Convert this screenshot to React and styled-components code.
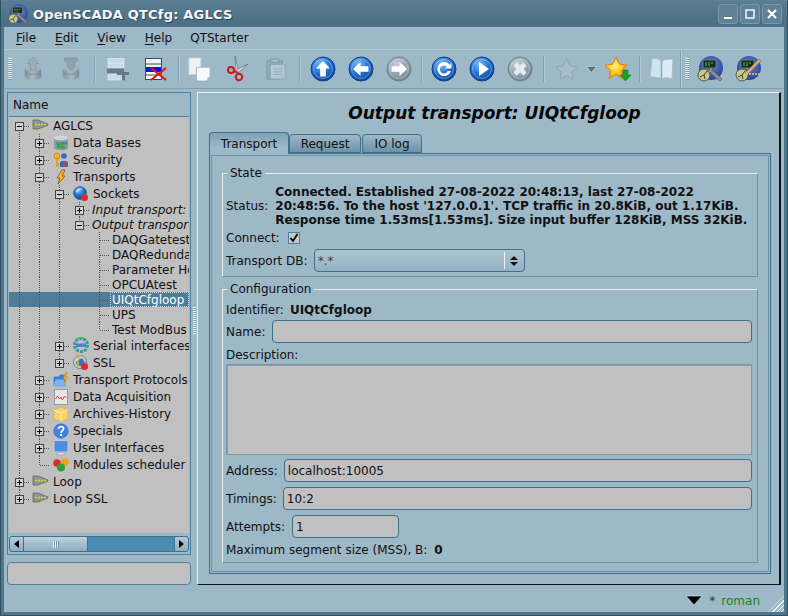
import styled, { createGlobalStyle } from "styled-components";

const GlobalStyle = createGlobalStyle`
  html, body { margin: 0; padding: 0; background: #9db8c7; }
  #root { width: 788px; height: 616px; overflow: hidden; }
  * { box-sizing: border-box; }
`;

const Window = styled.div`
  width: 788px;
  height: 616px;
  display: flex;
  flex-direction: column;
  background: #9db8c7;
  border: 1px solid #2f4f63;
  border-top-color: #5d8096;
  font-family: "DejaVu Sans", sans-serif;
  font-size: 12px;
  color: #111;
  overflow: hidden;
`;

const TitleBar = styled.div`
  height: 26px;
  flex: none;
  display: flex;
  align-items: center;
  padding: 0 5px 0 7px;
  background: linear-gradient(#597d92, #4a6f85);
`;

const TitleText = styled.div`
  margin-left: 5px;
  font-weight: bold;
  font-size: 13px;
  letter-spacing: 0.2px;
  color: #f4f7f9;
  text-shadow: 1px 1px 1px #2c4252;
  flex: 1;
`;

const WinButton = styled.div`
  width: 20px;
  height: 20px;
  margin-left: 2px;
  border: 1px solid #7b99ab;
  border-radius: 3px;
  background: #5f8297;
  display: flex;
  align-items: center;
  justify-content: center;
`;

const Body = styled.div`
  flex: 1;
  min-height: 0;
  display: flex;
  flex-direction: column;
  border-left: 3px solid #50768c;
  border-right: 3px solid #50768c;
  border-bottom: 3px solid #50768c;
`;

const MenuBar = styled.div`
  height: 23px;
  flex: none;
  display: flex;
  align-items: center;
  padding-left: 12px;
  border-bottom: 1px solid #b4cad6;
`;

const MenuItem = styled.span`
  margin-right: ${(p) => p.$gap}px;
  & u { text-underline-offset: 2px; }
`;

const ToolRow = styled.div`
  height: 39px;
  flex: none;
  display: flex;
  align-items: center;
  border-bottom: 1px solid #7f9fb2;
`;

const Grip = styled.div`
  width: 4px;
  height: 22px;
  margin: 0 ${(p) => p.$right}px 0 ${(p) => p.$left}px;
  flex: none;
  background: repeating-linear-gradient(#f1f5f7 0 1px, #7c99aa 1px 2px);
`;

const ToolButton = styled.div`
  width: ${(p) => p.$w || 38}px;
  height: 36px;
  flex: none;
  display: flex;
  align-items: center;
  justify-content: center;
`;

const ToolSep = styled.div`
  width: ${(p) => p.$w}px;
  height: 26px;
  flex: none;
  display: flex;
  justify-content: center;
  &::before {
    content: "";
    width: 1px;
    background: #84a2b4;
    box-shadow: 1px 0 0 #b4cad6;
  }
`;

const ToolEdge = styled.div`
  width: 2px;
  height: 38px;
  flex: none;
  background: #7f9fb2;
  border-right: 1px solid #b4cad6;
`;

const Main = styled.div`
  flex: 1;
  min-height: 0;
  display: flex;
  padding: 3px 3px 0 3px;
`;

const LeftColumn = styled.div`
  width: 184px;
  flex: none;
  display: flex;
  flex-direction: column;
  gap: 7px;
  padding-bottom: 3px;
`;

const TreePanel = styled.div`
  height: 463px;
  flex: none;
  display: flex;
  flex-direction: column;
  border: 1px solid #4f7f9c;
  padding: 1px;
  background: #9db8c7;
`;

const TreeHeader = styled.div`
  height: 23px;
  flex: none;
  padding: 0 0 0 4px;
  display: flex;
  align-items: center;
  border-bottom: 1px solid #4f7f9c;
`;

const TreeBody = styled.div`
  flex: 1;
  min-height: 0;
  background: #c0c0c0;
  overflow: hidden;
`;

const Row = styled.div`
  height: ${(p) => p.$h}px;
  display: flex;
  align-items: stretch;
  white-space: nowrap;
  padding-left: 1px;
  background: ${(p) => (p.$selected ? "#4f7d99" : "transparent")};
  color: ${(p) => (p.$selected ? "#fff" : "#111")};
  font-style: ${(p) => (p.$italic ? "italic" : "normal")};
`;

const dots = "repeating-linear-gradient(#555 0 1px, transparent 1px 2px)";
const hdots = "repeating-linear-gradient(90deg, #555 0 1px, transparent 1px 2px)";

const GuideCell = styled.div`
  width: 20px;
  flex: none;
  position: relative;
  &::before {
    content: "";
    display: ${(p) => (p.$line ? "block" : "none")};
    position: absolute;
    left: 9px;
    top: 0;
    bottom: 0;
    width: 1px;
    background: ${dots};
  }
`;

const BranchCell = styled.div`
  width: 20px;
  flex: none;
  position: relative;
  display: flex;
  align-items: center;
  &::before {
    content: "";
    position: absolute;
    left: 9px;
    top: ${(p) => (p.$first ? "50%" : "0")};
    bottom: ${(p) => (p.$last ? "50%" : "0")};
    width: 1px;
    background: ${dots};
  }
  &::after {
    content: "";
    position: absolute;
    left: 10px;
    right: 0;
    top: 50%;
    height: 1px;
    background: ${hdots};
  }
`;

const Expander = styled.div`
  position: absolute;
  z-index: 1;
  left: 5px;
  top: 50%;
  margin-top: -4px;
  width: 9px;
  height: 9px;
  border: 1px solid #444;
  background: #d0d0d0;
  &::before {
    content: "";
    position: absolute;
    left: 1px;
    right: 1px;
    top: 3px;
    height: 1px;
    background: #000;
  }
  &::after {
    content: "";
    display: ${(p) => (p.$open ? "none" : "block")};
    position: absolute;
    top: 1px;
    bottom: 1px;
    left: 3px;
    width: 1px;
    background: #000;
  }
`;

const TreeIcon = styled.div`
  width: 21px;
  flex: none;
  display: flex;
  align-items: center;
  justify-content: center;
`;

const TreeLabel = styled.div`
  display: flex;
  align-items: center;
  padding-left: 2px;
  ${(p) => p.$current && `flex: 1; outline: 1px dotted #c8d6de; outline-offset: -1px;`}
`;

const HScroll = styled.div`
  height: 16px;
  flex: none;
  display: flex;
  margin: 3px 0 1px;
  border: 1px solid #3f6f8d;
  border-radius: 3px;
  background: #4b8cb2;
  overflow: hidden;
`;

const ScrollArrow = styled.div`
  width: 14px;
  flex: none;
  background: linear-gradient(#b4cbd8, #8fadbe);
  border-left: ${(p) => (p.$right ? "1px solid #3f6f8d" : "none")};
  border-right: ${(p) => (p.$right ? "none" : "1px solid #3f6f8d")};
  display: flex;
  align-items: center;
  justify-content: center;
  &::before {
    content: "";
    border-top: 4px solid transparent;
    border-bottom: 4px solid transparent;
    border-left: ${(p) => (p.$right ? "5px solid #000" : "none")};
    border-right: ${(p) => (p.$right ? "none" : "5px solid #000")};
  }
`;

const ScrollThumb = styled.div`
  width: 64px;
  flex: none;
  background: linear-gradient(#bdd1dc, #8fadbe);
  border-right: 1px solid #3f6f8d;
  display: flex;
  align-items: center;
  justify-content: center;
  gap: 1px;
`;

const ThumbLine = styled.div`
  width: 1px;
  height: 7px;
  background: #f3f6f8;
  box-shadow: 1px 0 0 #6e8da0;
`;

const ScrollGroove = styled.div`
  flex: 1;
`;

const HintBox = styled.div`
  height: 23px;
  flex: none;
  background: #c0c0c0;
  border: 1px solid #4f7f9c;
  border-radius: 4px;
`;

const Splitter = styled.div`
  width: 6px;
  flex: none;
  display: flex;
  align-items: center;
  justify-content: center;
  padding-bottom: 28px;
  &::before {
    content: "";
    width: 3px;
    height: 27px;
    margin-top: -8px;
    background: repeating-linear-gradient(#eef3f6 0 1px, #86a4b5 1px 2px);
  }
`;

const RightPanel = styled.div`
  flex: 1;
  min-width: 0;
  display: flex;
  flex-direction: column;
  border-top: 1px solid #eef3f6;
  border-left: 1px solid #eef3f6;
  border-right: 2px solid #111;
  border-bottom: 1px solid #111;
  padding: 0 8px 10px 11px;
`;

const PageTitle = styled.div`
  height: 39px;
  flex: none;
  display: flex;
  align-items: center;
  justify-content: center;
  font-size: 17px;
  font-weight: bold;
  font-style: italic;
  color: #050505;
  padding: 1px 0 0 9px;
`;

const TabBar = styled.div`
  height: 21px;
  flex: none;
  display: flex;
  align-items: flex-end;
  position: relative;
  z-index: 1;
`;

const Tab = styled.div`
  width: ${(p) => p.$w}px;
  height: ${(p) => (p.$active ? 22 : 19)}px;
  flex: none;
  display: flex;
  align-items: center;
  justify-content: center;
  margin-right: ${(p) => (p.$active ? 0 : 1)}px;
  margin-bottom: ${(p) => (p.$active ? -1 : 0)}px;
  border: 1px solid #3f6f8d;
  border-bottom: ${(p) => (p.$active ? "none" : "1px solid #3f6f8d")};
  border-radius: 4px 4px 0 0;
  background: ${(p) =>
    p.$active
      ? "linear-gradient(#7ea2b7, #9db8c7 70%)"
      : "linear-gradient(#9db8c7, #6e92a8)"};
`;

const TabPane = styled.div`
  flex: 1;
  min-height: 0;
  display: flex;
  flex-direction: column;
  gap: 5px;
  border: 1px solid #3f6f8d;
  outline: 1px solid #6e92a8;
  outline-offset: -3px;
  padding: 12px 12px 11px 12px;
`;

const Group = styled.fieldset`
  margin: 0;
  padding: ${(p) => p.$pad};
  min-width: 0;
  border: 1px solid #7d8f9b;
  border-top-color: #e8eff3;
  border-left-color: #e8eff3;
  display: flex;
  flex-direction: column;
  flex: ${(p) => (p.$grow ? 1 : "none")};
  & > legend {
    padding: 0 3px;
    margin-left: 1px;
    line-height: 14px;
  }
`;

const StatusRow = styled.div`
  display: flex;
  align-items: center;
  gap: 7px;
`;

const BoldText = styled.div`
  font-weight: bold;
  line-height: 14px;
  white-space: pre;
`;

const FieldRow = styled.div`
  display: flex;
  align-items: center;
  gap: ${(p) => p.$gap ?? 4}px;
  height: ${(p) => p.$h}px;
  flex: none;
  margin-top: ${(p) => p.$top ?? 0}px;
`;

const CheckBox = styled.div`
  width: 12px;
  height: 12px;
  background: #c8c8c8;
  border: 1px solid #4f7f9c;
  display: flex;
  align-items: center;
  justify-content: center;
`;

const Combo = styled.div`
  width: 211px;
  height: 23px;
  border: 1px solid #3f6f8d;
  border-radius: 4px;
  background: linear-gradient(#adc5d2, #94b1c1);
  display: flex;
  align-items: center;
  padding-left: 3px;
  color: #444;
`;

const ComboText = styled.span`
  flex: 1;
`;

const ComboArrows = styled.div`
  width: 20px;
  height: 17px;
  border-left: 1px solid #eef3f6;
  display: flex;
  flex-direction: column;
  align-items: center;
  justify-content: center;
  gap: 2px;
`;

const Arrow = styled.div`
  width: 0;
  height: 0;
  border-left: 4px solid transparent;
  border-right: 4px solid transparent;
  border-bottom: ${(p) => (p.$up ? "4px solid #111" : "none")};
  border-top: ${(p) => (p.$up ? "none" : "4px solid #111")};
`;

const TextInput = styled.div`
  flex: ${(p) => (p.$w ? "none" : 1)};
  width: ${(p) => (p.$w ? `${p.$w}px` : "auto")};
  height: 23px;
  background: #c0c0c0;
  border: 1px solid #3f6f8d;
  border-radius: 4px;
  padding-left: 3px;
  display: flex;
  align-items: center;
`;

const TextArea = styled.div`
  height: 91px;
  flex: none;
  margin-top: 1px;
  background: #c0c0c0;
  border: 1px solid #7d97a8;
  box-shadow: inset 1px 1px 0 #8a9ca8;
`;

const StatusBar = styled.div`
  height: 27px;
  flex: none;
  display: flex;
  align-items: center;
  justify-content: flex-end;
  gap: 6px;
  padding: 4px 24px 0 0;
  position: relative;
`;

const UserName = styled.span`
  color: #118a11;
`;

const StarMark = styled.span`
  color: #333;
  font-size: 12px;
`;

const SizeGrip = styled.div`
  position: absolute;
  right: 0;
  bottom: 0;
  width: 16px;
  height: 16px;
  background: repeating-linear-gradient(135deg, transparent 0 2px, #eef3f6 2px 3px);
  clip-path: polygon(100% 0, 100% 100%, 0 100%);
`;

const SvgDefs = styled.svg`
  position: absolute;
  width: 0;
  height: 0;
`;

/* ---- icons ---- */

const Defs = () => (
  <SvgDefs>
    <defs>
      <radialGradient id="blue" cx="40%" cy="30%" r="75%">
        <stop offset="0" stopColor="#7cc0f4" />
        <stop offset="0.55" stopColor="#1c6ed0" />
        <stop offset="1" stopColor="#0b3d8e" />
      </radialGradient>
      <radialGradient id="grey" cx="40%" cy="30%" r="75%">
        <stop offset="0" stopColor="#c4d0d8" />
        <stop offset="0.6" stopColor="#8e9fab" />
        <stop offset="1" stopColor="#6b7d89" />
      </radialGradient>
      <linearGradient id="drum" x1="0" x2="1" y1="0" y2="0">
        <stop offset="0" stopColor="#7e929f" />
        <stop offset="0.5" stopColor="#a9bac5" />
        <stop offset="1" stopColor="#778b98" />
      </linearGradient>
      <radialGradient id="gold" cx="45%" cy="40%" r="70%">
        <stop offset="0" stopColor="#fff27a" />
        <stop offset="0.6" stopColor="#ffc20a" />
        <stop offset="1" stopColor="#ee7a08" />
      </radialGradient>
      <radialGradient id="logo" cx="50%" cy="40%" r="70%">
        <stop offset="0" stopColor="#5f86d6" />
        <stop offset="1" stopColor="#23398f" />
      </radialGradient>
    </defs>
  </SvgDefs>
);

const Disc = ({ children, fill = "url(#blue)", ring = "#0c3f92" }) => (
  <svg width="26" height="26" viewBox="0 0 26 26">
    <circle cx="13" cy="13" r="12" fill={fill} stroke={ring} strokeWidth="1" />
    <circle cx="13" cy="13" r="9.4" fill="none" stroke="#fff" strokeOpacity="0.35" strokeWidth="1" />
    {children}
  </svg>
);

const DbIcon = ({ down }) => (
  <svg width="20" height="26" viewBox="0 0 22 28">
    <path d="M2 13 v9 c0 5 18 5 18 0 v-9z" fill="url(#drum)" />
    <ellipse cx="11" cy="13" rx="9" ry="3.5" fill="#a3b4bf" />
    <path d="M2 17 c0 4 18 4 18 0" fill="none" stroke="#74889a" />
    {down ? (
      <path d="M4 2 h14 v3 l-3 1 v5 l-4 5 -4 -5 v-5 l-3 -1z" fill="#8fa3af" stroke="#72858f" strokeWidth="0.6" />
    ) : (
      <path d="M11 1 l6 7 h-3 v7 h-6 v-7 h-3z" fill="#9fb0bb" stroke="#72858f" strokeWidth="0.6" />
    )}
  </svg>
);

const AddItemIcon = () => (
  <svg width="22" height="23" viewBox="0 0 22 23">
    <rect x="1" y="0.5" width="16" height="4.5" fill="#c6dbe7" stroke="#e8f0f4" strokeWidth="0.6" />
    <rect x="1" y="5.5" width="16" height="4.5" fill="#c6dbe7" stroke="#e8f0f4" strokeWidth="0.6" />
    <rect x="0" y="10.5" width="17" height="5" fill="#66798a" />
    <rect x="1" y="16" width="16" height="6" fill="#c6dbe7" stroke="#e8f0f4" strokeWidth="0.6" />
    <path d="M10 14 h12 v3 h-4 v5.5 h-3 v-5.5 h-5z" fill="#66798a" />
  </svg>
);

const DelItemIcon = () => (
  <svg width="22" height="23" viewBox="0 0 22 23">
    <rect x="0.5" y="0.5" width="16" height="21" fill="#f4f6f7" stroke="#4a4a4a" />
    <path d="M1 6 h15 M1 17 h15" stroke="#4a4a4a" />
    <rect x="1" y="9" width="15" height="5" fill="#1515d8" />
    <path d="M6 10 l15 12 M21 10 l-15 12" stroke="#e01818" strokeWidth="2.2" />
  </svg>
);

const CopyIcon = () => (
  <svg width="24" height="25" viewBox="0 0 26 27">
    <path d="M1 1 h13 v14 l-3 4 h-10z" fill="#eef3f6" stroke="#c5d2da" />
    <path d="M14 15 l-3 4 v-4z" fill="#a4b6c2" />
    <path d="M9 11 h15 v11 l-3 4 h-12z" fill="#f7f9fa" stroke="#a0b0bb" />
    <path d="M24 22 l-3 4 v-4z" fill="#a4b6c2" />
  </svg>
);

const CutIcon = () => (
  <svg width="24" height="26" viewBox="0 0 24 26">
    <path d="M9 0 l3 13 -2 2 z" fill="#e6ecef" stroke="#5d6b75" strokeWidth="0.7" />
    <path d="M22 8 l-10 5 -2 3 3 0z" fill="#d8e0e5" stroke="#5d6b75" strokeWidth="0.7" />
    <circle cx="5" cy="14" r="3" fill="none" stroke="#c9181c" strokeWidth="2" />
    <circle cx="13" cy="21" r="3.2" fill="none" stroke="#c9181c" strokeWidth="2" />
    <path d="M7 15 l3 1 M12 18 l-1 -2" stroke="#c9181c" strokeWidth="2" />
  </svg>
);

const PasteIcon = () => (
  <svg width="20" height="22" viewBox="0 0 22 24">
    <rect x="1" y="3" width="17" height="20" fill="#90abbb" stroke="#7e98a8" />
    <rect x="5" y="7" width="16" height="16" fill="#b2c9d6" stroke="#8ba6b6" />
    <rect x="5" y="1" width="9" height="4" fill="#a4bccb" stroke="#7e98a8" />
    <path d="M8 12 h10 M8 15 h10 M8 18 h10" stroke="#90abbb" />
  </svg>
);

const ArrowGlyph = ({ dir }) => {
  const rot = { up: 0, left: -90, right: 90 }[dir];
  return (
    <path
      d="M13 5 l7 7.5 h-4.2 v8 h-5.6 v-8 h-4.2z"
      fill="#fff"
      transform={`rotate(${rot} 13 13)`}
    />
  );
};

const StarPath = "M12 1 l3.4 7.2 7.6 1 -5.6 5.3 1.5 7.8 -6.9 -3.9 -6.9 3.9 1.5 -7.8 -5.6 -5.3 7.6 -1z";

const StarGrey = () => (
  <svg width="23" height="22" viewBox="0 0 24 23">
    <path d={StarPath} fill="#a8c0ce" stroke="#8aa4b4" />
  </svg>
);

const StarAdd = () => (
  <svg width="27" height="27" viewBox="0 0 27 27">
    <path d={StarPath} fill="url(#gold)" stroke="#e47a0a" />
    <path d="M19 14 h5 v5 h3 l-5.5 6 -5.5 -6 h3z" fill="#17a517" stroke="#0d7d10" strokeWidth="0.5" />
  </svg>
);

const BookIcon = () => (
  <svg width="25" height="24" viewBox="0 0 25 24">
    <path d="M3 1 c4 0 7 1 9 3 v18 c-3 -2 -7 -2 -11 -2z" fill="#cfe3ee" stroke="#a7bdca" />
    <path d="M24 2 c-4 0 -8 0 -11 2 v18 c3 -2 7 -1 10 0z" fill="#dcebf3" stroke="#a7bdca" />
    <path d="M12.5 4 v18" stroke="#8ea8b7" />
  </svg>
);

const LogoIcon = ({ pencil, size = 26 }) => (
  <svg width={size} height={size} viewBox="0 0 26 26">
    <circle cx="14" cy="12" r="12" fill="url(#logo)" />
    <rect x="6" y="4" width="13" height="8" fill="#1b2c22" stroke="#6d7a80" />
    <path d="M8 7 h9 M8 9 h6" stroke="#38d838" strokeWidth="1" strokeDasharray="2 1" />
    <circle cx="7" cy="19" r="6" fill="#c6c88f" stroke="#55592e" />
    <path d="M7 19 l3 -4 M7 19 l-4 2 M7 19 l1 4" stroke="#3b3d20" strokeWidth="1" />
    {pencil ? (
      <g>
        <path d="M10 17 L24 3 l2 2 -14 14z" fill="#d9a878" stroke="#8d6a40" strokeWidth="0.5" />
        <path d="M11 18 h14" stroke="#e2d25a" strokeWidth="1.6" strokeDasharray="2 1" />
      </g>
    ) : (
      <path d="M12 11 l3 1 1 3 6 5 3 3 -2 2 -3 -2 -6 -6 -3 -1 -1 -3 2 1 1 -1z" fill="#8b8f92" stroke="#4d5154" strokeWidth="0.6" />
    )}
  </svg>
);

const ClusterIcon = () => (
  <svg width="17" height="16" viewBox="0 0 17 16">
    <path d="M1 2 h5 l10 4 v1 l-10 4 h-5z" fill="#8d9894" stroke="#545c57" strokeWidth="0.7" />
    <path d="M3 6.5 h11" stroke="#d9d33a" strokeWidth="1.4" strokeDasharray="2 1" />
    <path d="M1 13 h3 l1 2 M12 13 h3 l1 -1" stroke="#d9d33a" fill="none" />
  </svg>
);

const DbTreeIcon = () => (
  <svg width="16" height="16" viewBox="0 0 16 16">
    <path d="M1 3 v10 c0 3 14 3 14 0 v-10z" fill="#8b9aa3" />
    <ellipse cx="8" cy="3" rx="7" ry="2.4" fill="#cfd6da" />
    <path d="M3 7 l5 1 -1 2 5 1 v3 l-8 -1z" fill="#3aa545" />
    <path d="M8 7 l6 0 v2 l-6 1z" fill="#4a7bc0" />
  </svg>
);

const SecurityIcon = () => (
  <svg width="16" height="16" viewBox="0 0 16 16">
    <circle cx="4" cy="4" r="3" fill="#f2b418" stroke="#b97a0a" strokeWidth="0.7" />
    <path d="M4 7 v8 M4 12 h2 M4 14 h2" stroke="#e79a10" strokeWidth="1.6" />
    <circle cx="11" cy="4" r="2.8" fill="#2f6cc4" />
    <path d="M7 15 v-4 c0 -3 8 -3 8 0 v4z" fill="#2f6cc4" />
    <path d="M10 9 h2 l-0.5 6 h-1z" fill="#e3392a" />
  </svg>
);

const BoltIcon = () => (
  <svg width="16" height="16" viewBox="0 0 16 16">
    <path d="M9 1 L4 9 h3 L5 15 l7 -8 h-3 l3 -6z" fill="#f8c21f" stroke="#a5361c" strokeWidth="0.8" />
  </svg>
);

const GlobeIcon = ({ lock }) => (
  <svg width="16" height="16" viewBox="0 0 16 16">
    <circle cx="7" cy="7" r="6.5" fill={lock ? "#c4d2de" : "url(#blue)"} stroke="#2e5fa5" strokeWidth="0.7" />
    {lock && <circle cx="7" cy="7" r="4" fill="#3775c8" />}
    <path d="M3 5 c2 -3 6 -3 7 -2 c-2 0 -5 1 -6 4z" fill="#dbe9f5" />
    <circle cx="11.5" cy="11.5" r="3.6" fill="#dd2a2a" />
    <path d="M11.5 8 l0.5 -1.5" stroke="#2a9a2a" />
    {lock && <path d="M5 3 a2 2 0 1 1 0.1 0 M5 5 v7" stroke="#efb418" strokeWidth="1.6" fill="none" />}
  </svg>
);

const SerialIcon = () => (
  <svg width="16" height="17" viewBox="0 0 16 17">
    <circle cx="8" cy="8" r="6.5" fill="none" stroke="#2aa39a" strokeWidth="3" strokeDasharray="3 1" />
    <rect x="3" y="6.5" width="10" height="3.5" fill="#5c78d8" />
    <path d="M5 1 h6" stroke="#49b84a" strokeWidth="1.6" />
  </svg>
);

const FolderBoltIcon = () => (
  <svg width="16" height="16" viewBox="0 0 16 16">
    <path d="M1 5 h5 l1 -2 h5 v11 h-11z" fill="#3f80d8" stroke="#2a5ca8" strokeWidth="0.5" />
    <path d="M0.5 14.5 l2 -7 h11 l-2 7z" fill="#7eb3ee" />
    <path d="M13 0 L10 7 h2 l-1 4 4 -6 h-2 l1 -5z" fill="#f3b31b" stroke="#bf6b10" strokeWidth="0.5" />
  </svg>
);

const ChartIcon = () => (
  <svg width="16" height="16" viewBox="0 0 16 16">
    <rect x="1.5" y="0.5" width="13" height="15" fill="#e8e8e8" stroke="#9a9a9a" />
    <path d="M2.5 10 l2 -3 2 3 1.5 -2 1.5 3 2 -4 2 2" fill="none" stroke="#d94a4a" />
  </svg>
);

const CubeIcon = () => (
  <svg width="16" height="16" viewBox="0 0 16 16">
    <path d="M1 4 l7 -3 7 3 v9 l-7 2.5 -7 -2.5z" fill="#f6d469" stroke="#cfa638" strokeWidth="0.5" />
    <path d="M1 4 l7 3 7 -3 M8 7 v8" fill="none" stroke="#fff0b6" />
  </svg>
);

const HelpIcon = () => (
  <svg width="16" height="16" viewBox="0 0 16 16">
    <circle cx="8" cy="8" r="7.2" fill="#3f83e5" stroke="#2e62b8" strokeWidth="0.6" />
    <path d="M5.5 6 c0 -3.5 5.5 -3 5 0 c-0.2 1.6 -2.5 1.7 -2.5 4" fill="none" stroke="#fff" strokeWidth="1.7" />
    <rect x="7" y="11" width="2" height="2" fill="#fff" />
  </svg>
);

const MonitorIcon = () => (
  <svg width="16" height="16" viewBox="0 0 16 16">
    <rect x="1" y="0.5" width="14" height="11.5" fill="#4a8de2" stroke="#c8c8c8" />
    <path d="M5 12.5 h6 l1 2.5 h-8z" fill="#d6d6d6" stroke="#999" strokeWidth="0.5" />
  </svg>
);

const BallsIcon = () => (
  <svg width="16" height="15" viewBox="0 0 16 15">
    <circle cx="4" cy="6" r="3.8" fill="#e02b2b" />
    <circle cx="12" cy="5" r="3.8" fill="#f0a118" />
    <circle cx="8" cy="10.5" r="4" fill="#2ea12e" />
  </svg>
);

const treeIcons = {
  cluster: <ClusterIcon />,
  db: <DbTreeIcon />,
  security: <SecurityIcon />,
  bolt: <BoltIcon />,
  globe: <GlobeIcon />,
  serial: <SerialIcon />,
  ssl: <GlobeIcon lock />,
  folder: <FolderBoltIcon />,
  chart: <ChartIcon />,
  cube: <CubeIcon />,
  help: <HelpIcon />,
  monitor: <MonitorIcon />,
  balls: <BallsIcon />,
};

// guides: one flag per ancestor level, exp: "plus" or "minus"
const treeRows = [
  { h: 17, guides: [], exp: "minus", first: true, icon: "cluster", text: "AGLCS" },
  { h: 17, guides: [1], exp: "plus", icon: "db", text: "Data Bases" },
  { h: 17, guides: [1], exp: "plus", icon: "security", text: "Security" },
  { h: 17, guides: [1], exp: "minus", icon: "bolt", text: "Transports" },
  { h: 17, guides: [1, 1], exp: "minus", icon: "globe", text: "Sockets" },
  { h: 15, guides: [1, 1, 1], exp: "plus", italic: true, text: "Input transport:" },
  { h: 15, guides: [1, 1, 1], exp: "minus", italic: true, last: true, text: "Output transport:" },
  { h: 15, guides: [1, 1, 1, 0], text: "DAQGatetest" },
  { h: 15, guides: [1, 1, 1, 0], text: "DAQRedundancy" },
  { h: 15, guides: [1, 1, 1, 0], text: "Parameter Hostname" },
  { h: 15, guides: [1, 1, 1, 0], text: "OPCUAtest" },
  { h: 15, guides: [1, 1, 1, 0], text: "UIQtCfgloop", selected: true },
  { h: 15, guides: [1, 1, 1, 0], text: "UPS" },
  { h: 15, guides: [1, 1, 1, 0], last: true, text: "Test ModBus" },
  { h: 17, guides: [1, 1], exp: "plus", icon: "serial", text: "Serial interfaces" },
  { h: 17, guides: [1, 1], exp: "plus", last: true, icon: "ssl", text: "SSL" },
  { h: 17, guides: [1], exp: "plus", icon: "folder", text: "Transport Protocols" },
  { h: 17, guides: [1], exp: "plus", icon: "chart", text: "Data Acquisition" },
  { h: 17, guides: [1], exp: "plus", icon: "cube", text: "Archives-History" },
  { h: 17, guides: [1], exp: "plus", icon: "help", text: "Specials" },
  { h: 17, guides: [1], exp: "plus", icon: "monitor", text: "User Interfaces" },
  { h: 17, guides: [1], last: true, icon: "balls", text: "Modules scheduler" },
  { h: 17, guides: [], exp: "plus", icon: "cluster", text: "Loop" },
  { h: 17, guides: [], exp: "plus", last: true, icon: "cluster", text: "Loop SSL" },
];

const TreeRow = ({ row }) => (
  <Row $h={row.h} $selected={row.selected} $italic={row.italic}>
    {row.guides.map((on, i) => (
      <GuideCell key={i} $line={!!on} />
    ))}
    <BranchCell $first={row.first} $last={row.last}>
      {row.exp && <Expander $open={row.exp === "minus"} />}
    </BranchCell>
    {row.icon && <TreeIcon>{treeIcons[row.icon]}</TreeIcon>}
    <TreeLabel $current={row.selected}>{row.text}</TreeLabel>
  </Row>
);

export default function App() {
  return (
    <>
      <GlobalStyle />
      <Defs />
      <Window>
        <TitleBar>
          <LogoIcon size={20} />
          <TitleText>OpenSCADA QTCfg: AGLCS</TitleText>
          <WinButton>
            <svg width="12" height="12" viewBox="0 0 12 12">
              <path d="M2 10 h8" stroke="#fff" strokeWidth="2" />
            </svg>
          </WinButton>
          <WinButton>
            <svg width="12" height="12" viewBox="0 0 12 12">
              <rect x="2" y="2" width="8" height="8" fill="none" stroke="#fff" strokeWidth="1.4" />
            </svg>
          </WinButton>
          <WinButton>
            <svg width="12" height="12" viewBox="0 0 12 12">
              <path d="M2 2 l8 8 M10 2 l-8 8" stroke="#fff" strokeWidth="2" />
            </svg>
          </WinButton>
        </TitleBar>
        <Body>
          <MenuBar>
            <MenuItem $gap={19}><u>F</u>ile</MenuItem>
            <MenuItem $gap={19}><u>E</u>dit</MenuItem>
            <MenuItem $gap={19}><u>V</u>iew</MenuItem>
            <MenuItem $gap={18}><u>H</u>elp</MenuItem>
            <MenuItem $gap={0}>QTStarter</MenuItem>
          </MenuBar>
          <ToolRow>
            <Grip $left={4} $right={2} />
            <ToolButton><DbIcon /></ToolButton>
            <ToolButton><DbIcon down /></ToolButton>
            <ToolSep $w={9} />
            <ToolButton><AddItemIcon /></ToolButton>
            <ToolButton><DelItemIcon /></ToolButton>
            <ToolSep $w={6} />
            <ToolButton><CopyIcon /></ToolButton>
            <ToolButton><CutIcon /></ToolButton>
            <ToolButton><PasteIcon /></ToolButton>
            <ToolSep $w={9} />
            <ToolButton>
              <Disc><ArrowGlyph dir="up" /></Disc>
            </ToolButton>
            <ToolButton>
              <Disc><ArrowGlyph dir="left" /></Disc>
            </ToolButton>
            <ToolButton>
              <Disc fill="url(#grey)" ring="#6f828e"><ArrowGlyph dir="right" /></Disc>
            </ToolButton>
            <ToolSep $w={7} />
            <ToolButton>
              <Disc>
                <path d="M19 9 a7 7 0 1 0 1 6 h-3.4 a4 4 0 1 1 -0.6 -4 l-2.4 1.6 h6.8 v-6.6z" fill="#fff" />
              </Disc>
            </ToolButton>
            <ToolButton>
              <Disc><path d="M10 6 l10 7 -10 7z" fill="#fff" /></Disc>
            </ToolButton>
            <ToolButton>
              <Disc fill="url(#grey)" ring="#6f828e">
                <path d="M8 8 l10 10 M18 8 l-10 10" stroke="#e3edf2" strokeWidth="4.6" />
              </Disc>
            </ToolButton>
            <ToolSep $w={8} />
            <ToolButton><StarGrey /></ToolButton>
            <ToolButton $w={13}>
              <svg width="11" height="7" viewBox="0 0 11 7">
                <path d="M0.5 0.5 h10 l-5 6z" fill="#5c6f7b" stroke="#eef3f6" strokeWidth="0.5" />
              </svg>
            </ToolButton>
            <ToolButton><StarAdd /></ToolButton>
            <ToolSep $w={7} />
            <ToolButton $w={37}><BookIcon /></ToolButton>
            <ToolEdge />
            <Grip $left={3} $right={2} />
            <ToolButton><LogoIcon /></ToolButton>
            <ToolButton $w={37}><LogoIcon pencil /></ToolButton>
          </ToolRow>
          <Main>
            <LeftColumn>
              <TreePanel>
                <TreeHeader>Name</TreeHeader>
                <TreeBody>
                  {treeRows.map((row) => (
                    <TreeRow key={row.text} row={row} />
                  ))}
                </TreeBody>
                <HScroll>
                  <ScrollArrow />
                  <ScrollThumb>
                    <ThumbLine />
                    <ThumbLine />
                    <ThumbLine />
                  </ScrollThumb>
                  <ScrollGroove />
                  <ScrollArrow $right />
                </HScroll>
              </TreePanel>
              <HintBox />
            </LeftColumn>
            <Splitter />
            <RightPanel>
              <PageTitle>Output transport: UIQtCfgloop</PageTitle>
              <TabBar>
                <Tab $w={80} $active>Transport</Tab>
                <Tab $w={72}>Request</Tab>
                <Tab $w={60}>IO log</Tab>
              </TabBar>
              <TabPane>
                <Group $pad="5px 5px 4px 3px">
                  <legend>State</legend>
                  <StatusRow>
                    <span>Status:</span>
                    <BoldText>{"Connected. Established 27-08-2022 20:48:13, last 27-08-2022\n20:48:56. To the host '127.0.0.1'. TCP traffic in 20.8KiB, out 1.17KiB.\nResponse time 1.53ms[1.53ms]. Size input buffer 128KiB, MSS 32KiB."}</BoldText>
                  </StatusRow>
                  <FieldRow $h={18} $top={2} $gap={8}>
                    <span>Connect:</span>
                    <CheckBox>
                      <svg width="10" height="10" viewBox="0 0 10 10">
                        <path d="M1.5 5 l2.5 3 l4.5 -7" fill="none" stroke="#000" strokeWidth="1.8" />
                      </svg>
                    </CheckBox>
                  </FieldRow>
                  <FieldRow $h={23} $top={2} $gap={6}>
                    <span>Transport DB:</span>
                    <Combo>
                      <ComboText>*.*</ComboText>
                      <ComboArrows>
                        <Arrow $up />
                        <Arrow />
                      </ComboArrows>
                    </Combo>
                  </FieldRow>
                </Group>
                <Group $grow $pad="6px 5px 4px 3px">
                  <legend>Configuration</legend>
                  <FieldRow $h={16} $gap={6}>
                    <span>Identifier:</span>
                    <BoldText>UIQtCfgloop</BoldText>
                  </FieldRow>
                  <FieldRow $h={23} $top={2} $gap={7}>
                    <span>Name:</span>
                    <TextInput />
                  </FieldRow>
                  <FieldRow $h={16} $top={4}>
                    <span>Description:</span>
                  </FieldRow>
                  <TextArea />
                  <FieldRow $h={23} $top={4} $gap={6}>
                    <span>Address:</span>
                    <TextInput>localhost:10005</TextInput>
                  </FieldRow>
                  <FieldRow $h={23} $top={5} $gap={6}>
                    <span>Timings:</span>
                    <TextInput>10:2</TextInput>
                  </FieldRow>
                  <FieldRow $h={23} $top={5} $gap={7}>
                    <span>Attempts:</span>
                    <TextInput $w={107}>1</TextInput>
                  </FieldRow>
                  <FieldRow $h={16} $top={4} $gap={7}>
                    <span>Maximum segment size (MSS), B:</span>
                    <BoldText>0</BoldText>
                  </FieldRow>
                </Group>
              </TabPane>
            </RightPanel>
          </Main>
          <StatusBar>
            <svg width="18" height="11" viewBox="0 0 18 11">
              <path d="M1 1 h16 l-8 9z" fill="#000" stroke="#d4dfe5" strokeWidth="0.7" />
            </svg>
            <StarMark>*</StarMark>
            <UserName>roman</UserName>
            <SizeGrip />
          </StatusBar>
        </Body>
      </Window>
    </>
  );
}
